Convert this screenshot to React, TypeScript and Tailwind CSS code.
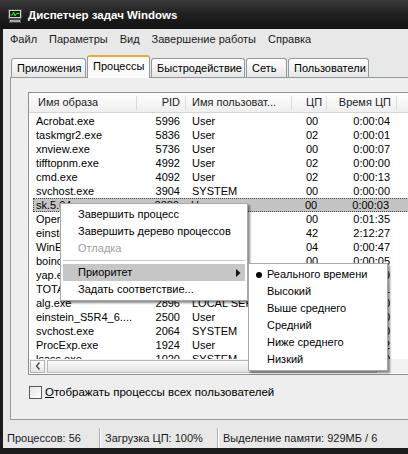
import React from "react";

type Row = [string, string, string, string, string];

const rows: Row[] = [
  ["Acrobat.exe", "5996", "User", "00", "0:00:04"],
  ["taskmgr2.exe", "5836", "User", "02", "0:00:01"],
  ["xnview.exe", "5736", "User", "00", "0:00:07"],
  ["tifftopnm.exe", "4992", "User", "02", "0:00:00"],
  ["cmd.exe", "4092", "User", "02", "0:00:13"],
  ["svchost.exe", "3904", "SYSTEM", "00", "0:00:00"],
  ["sk.5.04.exe", "3880", "User", "00", "0:00:03"],
  ["Opera.exe", "3772", "User", "00", "0:01:35"],
  ["einstein_S5R4_6....", "3552", "User", "42", "2:12:27"],
  ["WinExp.exe", "3400", "User", "04", "0:00:47"],
  ["boinc.exe", "3296", "User", "00", "0:00:05"],
  ["yap.exe", "3164", "User", "00", "0:00:09"],
  ["TOTALCMD.EXE", "3008", "User", "00", "0:00:11"],
  ["alg.exe", "2896", "LOCAL SER...", "00", "0:00:00"],
  ["einstein_S5R4_6....", "2500", "User", "00", "0:00:00"],
  ["svchost.exe", "2064", "SYSTEM", "00", "0:00:00"],
  ["ProcExp.exe", "1924", "User", "00", "0:00:02"],
  ["lsass.exe", "1020", "SYSTEM", "00", "0:00:00"],
];

function TitleIcon() {
  return (
    <svg width="16" height="16" viewBox="0 0 16 16">
      <rect x="1.5" y="1.5" width="13" height="9" fill="#cfd3d6" stroke="#4a4a4a" />
      <rect x="3" y="3" width="10" height="6" fill="#0d2410" />
      <polyline points="3.5,7 5.5,7 6.5,4 8,8 9.5,5.5 12.5,5.5" fill="none" stroke="#39e639" strokeWidth="1" />
      <rect x="2.5" y="11.5" width="11" height="3" fill="#bfc3c6" stroke="#4a4a4a" />
      <line x1="4" y1="13" x2="12" y2="13" stroke="#777" strokeWidth="0.8" />
    </svg>
  );
}

function Tab({ label, w, selected }: { label: string; w: string; selected?: boolean }) {
  if (selected) {
    return (
      <div
        className={`${w} relative z-10 mb-[-1px] h-[23px] shrink-0 rounded-t-[3px] border-x border-t-[2px] border-x-[#919b9c] border-t-[#f0a838] bg-[#fbfbfb] pl-[5px] pt-[2px] leading-[15px]`}
      >
        {label}
      </div>
    );
  }
  return (
    <div
      className={`${w} h-[19px] shrink-0 rounded-t-[3px] border-x border-t border-[#919b9c] bg-gradient-to-b from-[#ffffff] to-[#e6e6e6] pl-[5px] pt-[2px] leading-[15px]`}
    >
      {label}
    </div>
  );
}

function HeaderCell({ children, w, align }: { children?: React.ReactNode; w: string; align: string }) {
  return (
    <div className={`${w} ${align} relative flex h-full shrink-0 items-center`}>
      <span className="truncate">{children}</span>
      <span className="absolute right-0 top-[3px] h-[14px] w-px bg-[#dcdcdc]" />
    </div>
  );
}

export default function App() {
  return (
    <div className="relative h-[454px] w-[408px] overflow-hidden bg-[#1b1b1b] font-['Liberation_Sans',Arial,sans-serif] text-[11px] text-black">
      {/* Title bar */}
      <div className="flex h-[29px] items-center gap-[5px] bg-gradient-to-b from-[#3a3a3a] via-[#202020] to-[#121212] pl-[7px] pt-[3px]">
        <TitleIcon />
        <span className="text-[11.5px] font-bold text-white">Диспетчер задач Windows</span>
      </div>

      <div className="ml-[3px] flex h-[419px] flex-col bg-[#e8e8e8]">
        {/* Menu bar */}
        <div className="flex h-[21px] items-center pl-[1px] text-[11px] text-[#1a1a1a]">
          <span className="px-[6px]">Файл</span>
          <span className="px-[6px]">Параметры</span>
          <span className="px-[6px]">Вид</span>
          <span className="px-[6px]">Завершение работы</span>
          <span className="px-[6px]">Справка</span>
        </div>

        {/* Tabs */}
        <div className="flex h-[27px] items-end gap-[1px] pl-[8px] text-[11px]">
          <Tab label="Приложения" w="w-[75px]" />
          <Tab label="Процессы" w="w-[63px]" selected />
          <Tab label="Быстродействие" w="w-[94px]" />
          <Tab label="Сеть" w="w-[41px]" />
          <Tab label="Пользователи" w="w-[81px]" />
        </div>

        {/* Panel */}
        <div className="ml-[7px] flex h-[343px] w-[430px] shrink-0 flex-col border border-[#919b9c] bg-[#eeeeee] pl-[17px] pt-[14px]">
          {/* List */}
          <div className="flex h-[283px] w-[420px] flex-col border border-[#8c8f94] bg-white">
            <div className="flex h-[20px] shrink-0 border-b border-[#d5d5d5] bg-gradient-to-b from-[#ffffff] to-[#efefef] text-[#222]">
              <HeaderCell w="w-[108px]" align="pl-[9px]">Имя образа</HeaderCell>
              <HeaderCell w="w-[49px]" align="justify-end pr-[6px]">PID</HeaderCell>
              <HeaderCell w="w-[106px]" align="pl-[6px]">Имя пользоват...</HeaderCell>
              <HeaderCell w="w-[35px]" align="pl-[14px]">ЦП</HeaderCell>
              <HeaderCell w="w-[70px]" align="justify-end pr-[6px]">Время ЦП</HeaderCell>
            </div>
            <div className="h-[246px] shrink-0 overflow-hidden pt-[1px]">
              {rows.map((r, i) => {
                const sel = i === 6;
                return (
                  <div
                    key={i}
                    className={`flex h-[14px] items-center leading-[14px] ${
                      sel ? "ml-[4px] border border-dotted border-[#444] bg-[#c4c4c4]" : ""
                    }`}
                  >
                    <div className={`${sel ? "w-[102px] pl-[2px]" : "w-[108px] pl-[7px]"} shrink-0 overflow-hidden whitespace-nowrap`}>
                      {r[0]}
                    </div>
                    <div className="w-[49px] shrink-0 pr-[6px] text-right">{r[1]}</div>
                    <div className="w-[106px] shrink-0 overflow-hidden whitespace-nowrap pl-[6px]">{r[2]}</div>
                    <div className="w-[35px] shrink-0 pl-[14px]">{r[3]}</div>
                    <div className="w-[70px] shrink-0 pr-[7px] text-right">{r[4]}</div>
                  </div>
                );
              })}
            </div>
            {/* Horizontal scrollbar */}
            <div className="flex h-[14px] shrink-0 items-center bg-[#f2f2f2]">
              <div className="ml-[1px] flex h-[13px] w-[15px] items-center justify-center border border-[#b5b5b5] bg-gradient-to-b from-[#fdfdfd] to-[#e4e4e4]">
                <svg width="6" height="8" viewBox="0 0 6 8">
                  <polyline points="4.5,0.5 1.5,4 4.5,7.5" fill="none" stroke="#444" strokeWidth="1.3" />
                </svg>
              </div>
              <div className="ml-[2px] h-[13px] w-[330px] border border-[#b8b8b8] bg-gradient-to-b from-[#fbfbfb] to-[#e2e2e2]" />
            </div>
          </div>

          {/* Checkbox */}
          <div className="mt-[9px] flex items-center gap-[3px] pl-[1px]">
            <div className="h-[13px] w-[13px] border border-[#5a5a5a] bg-gradient-to-br from-[#e6e6e6] to-[#ffffff]" />
            <span className="text-[11.5px]">
              <span className="underline">О</span>тображать процессы всех пользователей
            </span>
          </div>
        </div>

        <div className="h-[8px] shrink-0" />

        {/* Status bar */}
        <div className="flex h-[20px] shrink-0 items-center text-[11px] text-[#1a1a1a]">
          <div className="flex h-full w-[97px] items-center border-r border-[#b0b0b0] pl-[4px]">Процессов: 56</div>
          <div className="flex h-full w-[118px] items-center border-l border-r border-l-white border-r-[#b0b0b0] pl-[4px]">
            Загрузка ЦП: 100%
          </div>
          <div className="flex h-full items-center whitespace-nowrap border-l border-white pl-[4px]">
            Выделение памяти: 929МБ / 6
          </div>
        </div>
      </div>

      {/* Context menu */}
      <div className="absolute left-[60px] top-[203px] w-[188px] border border-[#a8a8a8] bg-white py-[2px] shadow-[2px_2px_2px_rgba(0,0,0,0.45)]">
        <div className="flex h-[17px] items-center pl-[17px]">Завершить процесс</div>
        <div className="flex h-[17px] items-center pl-[17px]">Завершить дерево процессов</div>
        <div className="flex h-[17px] items-center pl-[17px] text-[#a0a0a0]">Отладка</div>
        <div className="mx-[2px] my-[3px] h-px bg-[#c8c8c8]" />
        <div className="mx-[2px] flex h-[17px] items-center justify-between bg-[#c6c6c6] pl-[15px] pr-[4px]">
          <span>Приоритет</span>
          <svg width="5" height="8" viewBox="0 0 5 8">
            <polygon points="0,0 4.5,4 0,8" fill="#111" />
          </svg>
        </div>
        <div className="flex h-[17px] items-center pl-[17px]">Задать соответствие...</div>
      </div>

      {/* Submenu */}
      <div className="absolute left-[248px] top-[263px] w-[140px] border border-[#a8a8a8] bg-white py-[2px] shadow-[2px_2px_2px_rgba(0,0,0,0.45)]">
        {["Реального времени", "Высокий", "Выше среднего", "Средний", "Ниже среднего", "Низкий"].map((t, i) => (
          <div key={t} className="relative flex h-[17px] items-center pl-[18px]">
            {i === 0 && <span className="absolute left-[7px] top-[6px] h-[6px] w-[6px] rounded-full bg-black" />}
            {t}
          </div>
        ))}
      </div>
    </div>
  );
}
